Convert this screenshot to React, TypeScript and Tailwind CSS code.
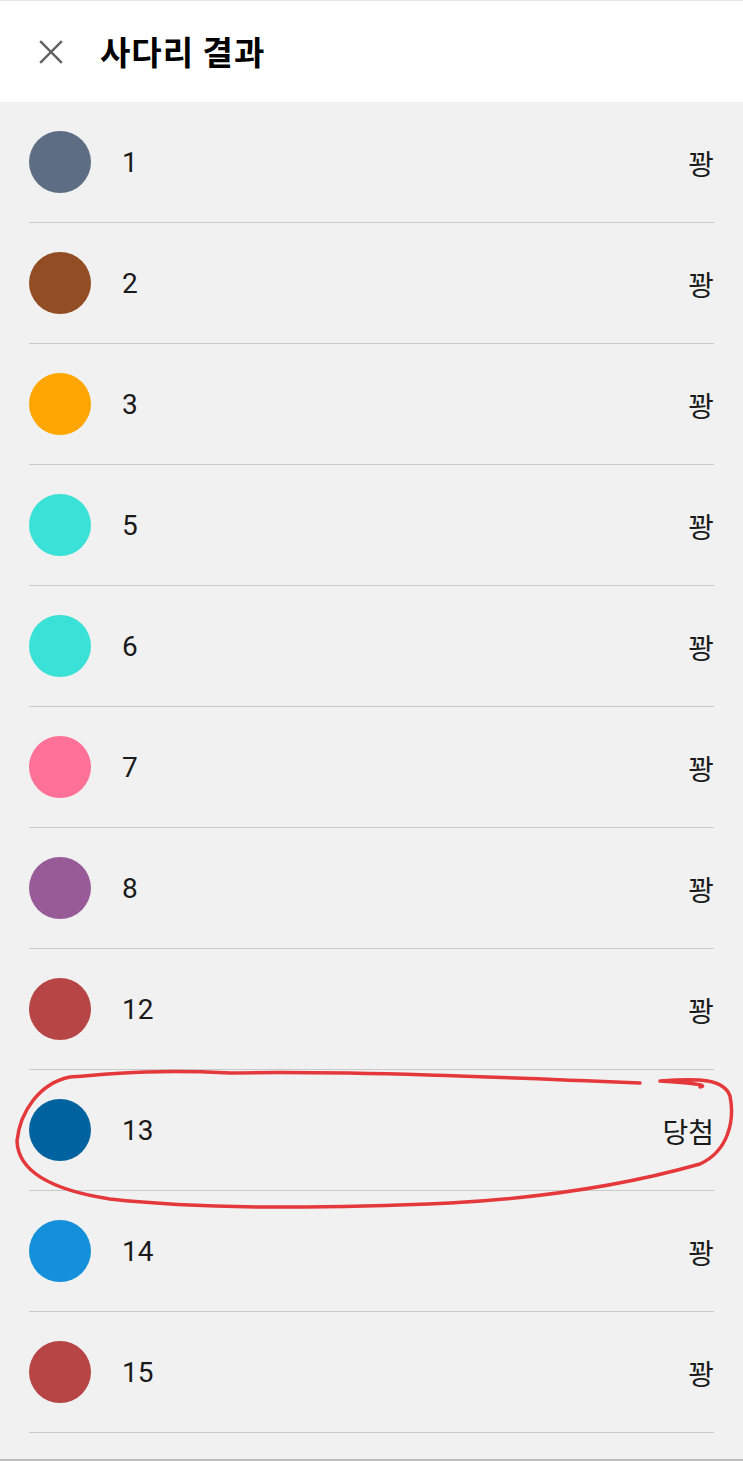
import React from 'react';

const rows = [
  { n: '1', color: '#5d6e84', result: '꽝' },
  { n: '2', color: '#934d25', result: '꽝' },
  { n: '3', color: '#ffa700', result: '꽝' },
  { n: '5', color: '#3ae1d6', result: '꽝' },
  { n: '6', color: '#3ae1d6', result: '꽝' },
  { n: '7', color: '#ff7197', result: '꽝' },
  { n: '8', color: '#985b98', result: '꽝' },
  { n: '12', color: '#b84545', result: '꽝' },
  { n: '13', color: '#00629f', result: '당첨' },
  { n: '14', color: '#1390d9', result: '꽝' },
  { n: '15', color: '#b84545', result: '꽝' },
];

export default function App() {
  return (
    <div
      className="relative w-[743px] h-[1461px] overflow-hidden bg-[#f1f1f1] border-t border-b-2 border-t-[#e6e6e6] border-b-[#bdbdbd]"
      style={{ fontFamily: 'Roboto, "Noto Sans CJK KR", sans-serif' }}
    >
      {/* Header */}
      <div className="h-[101px] bg-white flex items-center">
        <div className="w-[100px] flex justify-center pl-[1px]">
          <svg width="26" height="26" viewBox="0 0 24 24" fill="none" stroke="#616161" strokeWidth="2.2">
            <path d="M2 2 L22 22 M22 2 L2 22" />
          </svg>
        </div>
        <h1 className="text-[33px] font-bold text-black tracking-[1px]" style={{ fontFamily: '"Noto Sans CJK KR", sans-serif' }}>
          사다리 결과
        </h1>
      </div>

      {/* List */}
      <div className="px-[29px]">
        {rows.map((r, i) => (
          <div key={i} className="h-[121px] flex items-center border-b border-[#c9c9c9]">
            <div className="w-[62px] h-[62px] rounded-full shrink-0" style={{ backgroundColor: r.color }} />
            <div className="ml-[31px] text-[28px] text-[#1a1a1a] flex-1 pt-[2px]">{r.n}</div>
            <div className="text-[28px] text-[#1a1a1a] pt-[2px]" style={{ fontFamily: '"Noto Sans CJK KR", sans-serif' }}>
              {r.result}
            </div>
          </div>
        ))}
      </div>

      {/* Hand-drawn red annotation */}
      <svg className="absolute left-0 top-0 pointer-events-none" width="743" height="1461">
        <path
          d="M640 1082 C 500 1076, 350 1070, 230 1072 C 150 1068, 110 1073, 70 1076 C 40 1082, 20 1110, 17 1140 C 18 1168, 45 1188, 110 1198 C 200 1208, 320 1208, 450 1202 C 560 1196, 640 1180, 700 1163 C 728 1150, 735 1120, 730 1095 C 724 1078, 700 1077, 660 1080 C 690 1082, 710 1084, 700 1086"
          fill="none"
          stroke="#e5383b"
          strokeWidth="3.5"
          strokeLinecap="round"
          strokeLinejoin="round"
        />
      </svg>
    </div>
  );
}
